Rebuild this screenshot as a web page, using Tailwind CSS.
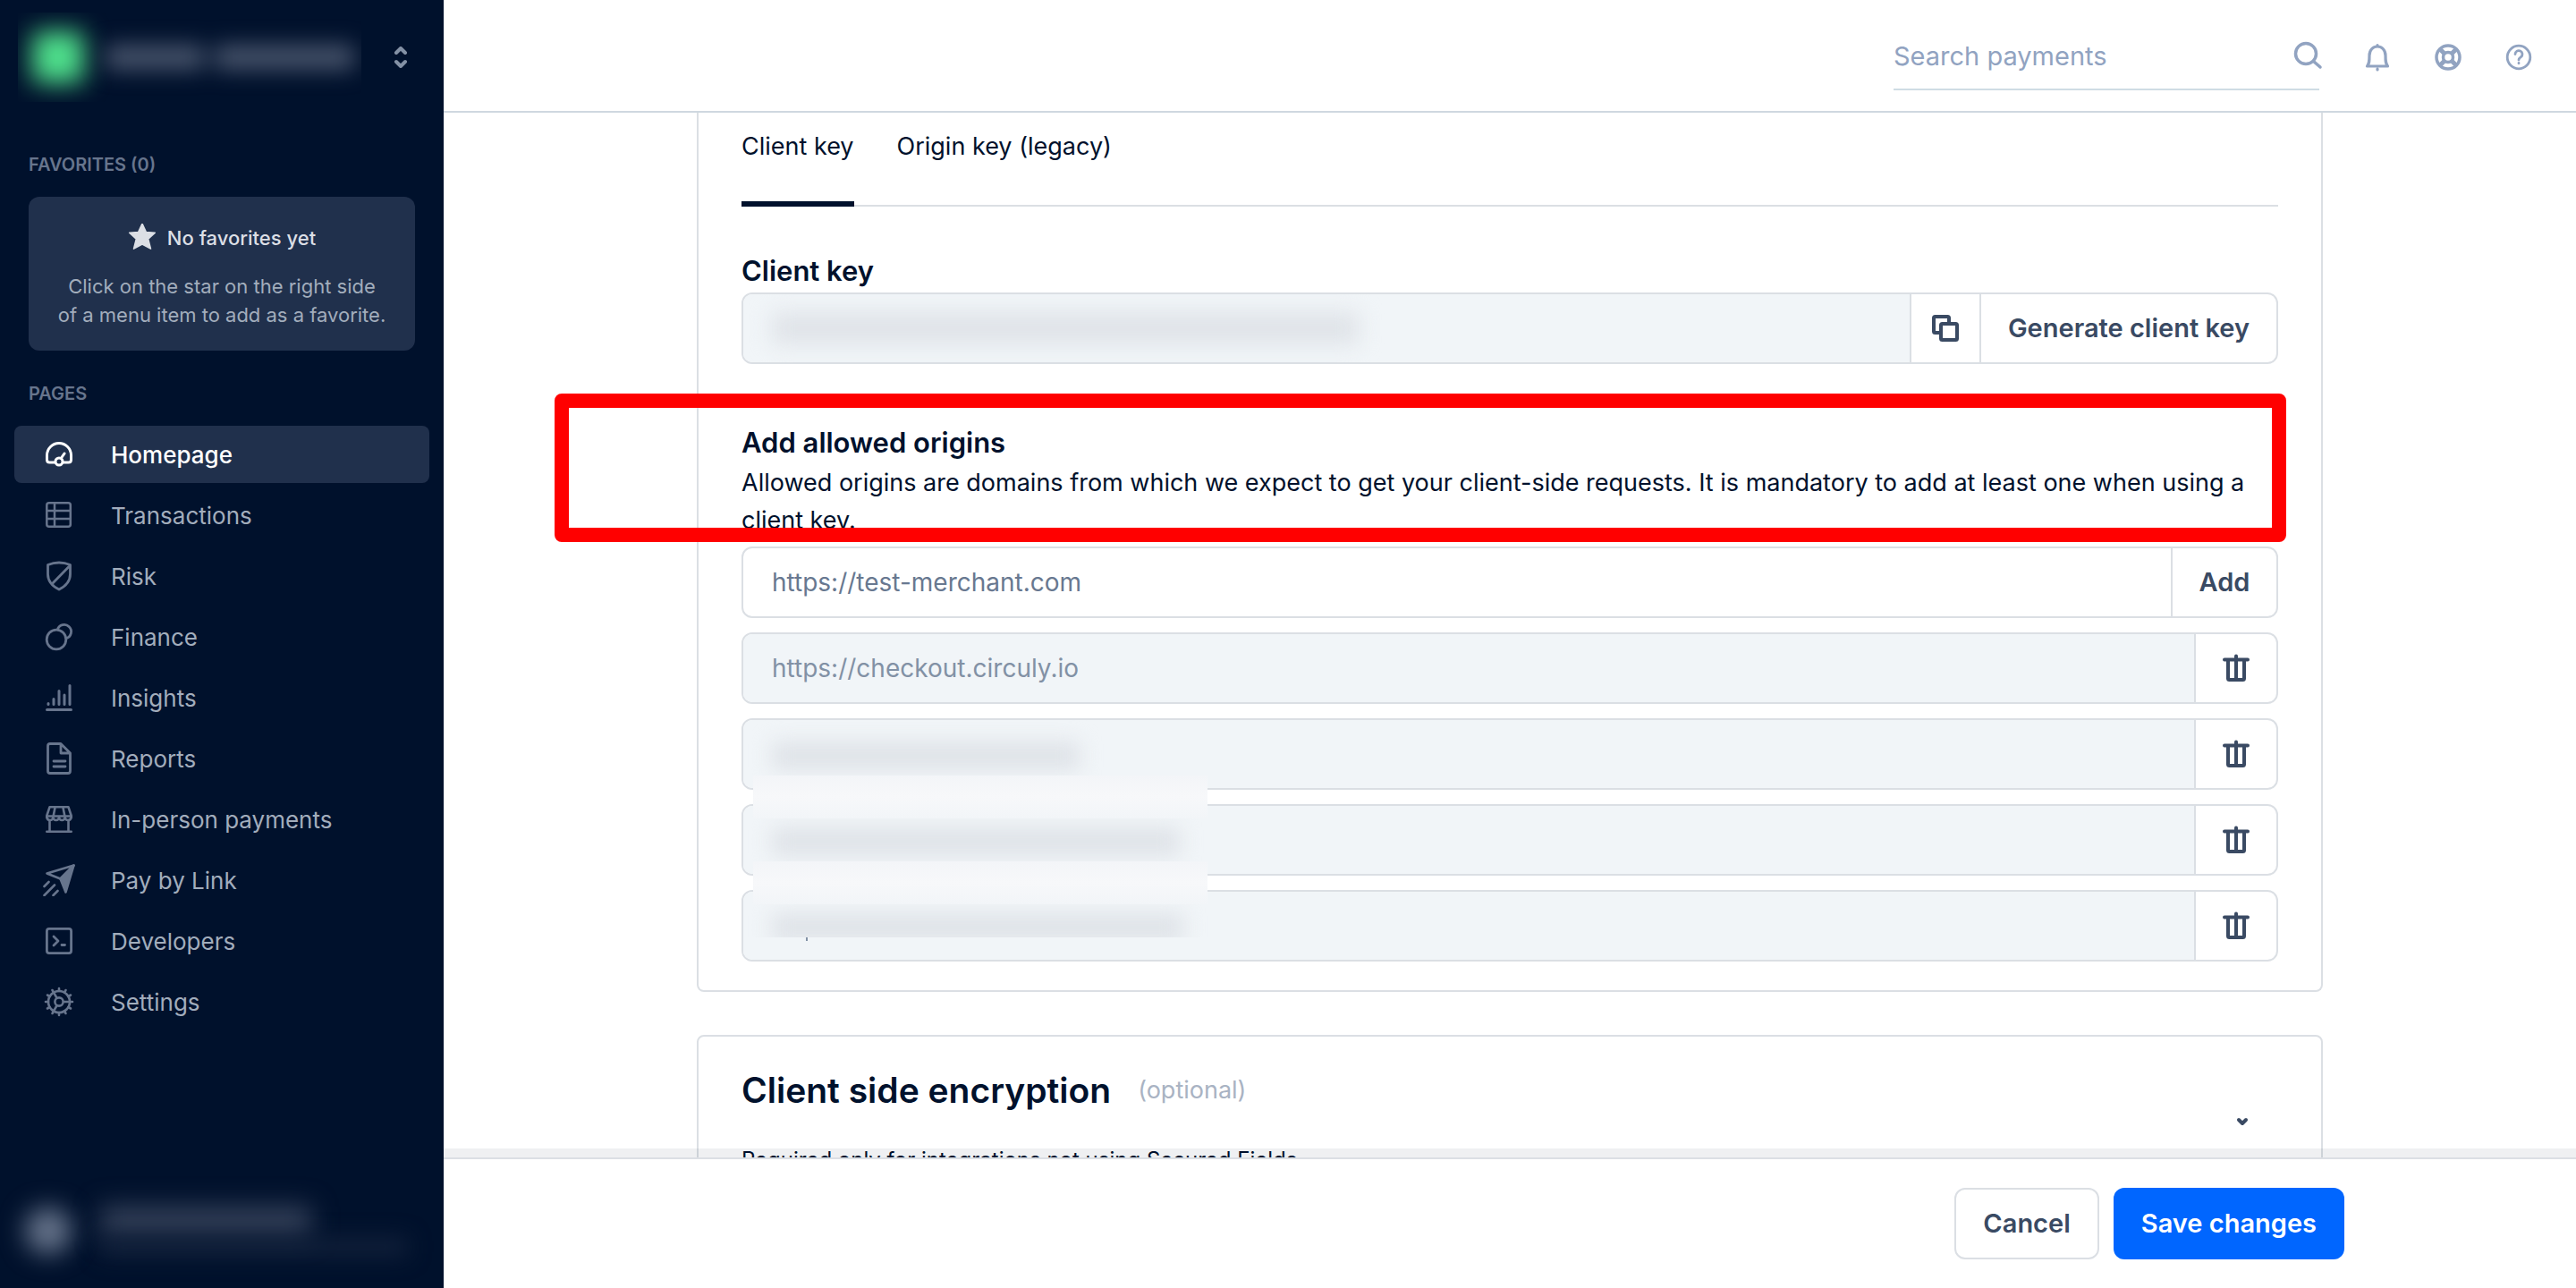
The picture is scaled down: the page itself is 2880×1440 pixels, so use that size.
<!DOCTYPE html>
<html lang="en">
  <head>
    <meta charset="UTF-8" />
    <meta name="viewport" content="width=device-width, initial-scale=1.0" />
    <title>Client settings</title>
    <script src="https://cdn.jsdelivr.net/npm/@tailwindcss/browser@4"></script>
  </head>
  <body class="flex h-screen overflow-hidden bg-white font-['Inter','Liberation_Sans',sans-serif] text-[27px] text-[#00112c]">
    <!-- Sidebar -->
    <aside class="flex w-[496px] shrink-0 flex-col bg-[#00112c]">
      <div class="flex h-32 items-center justify-between pr-9 pl-5">
        <div class="flex h-[100px] w-96 items-center gap-6 overflow-hidden pl-4" aria-hidden="true">
          <div class="size-[58px] shrink-0 rounded-lg bg-[#4fe08c] blur-[14px]"></div>
          <div class="flex gap-3 blur-[12px]">
            <div class="h-7 w-[110px] rounded bg-[#46536a]"></div>
            <div class="h-7 w-[156px] rounded bg-[#46536a]"></div>
          </div>
        </div>
        <button type="button" aria-label="Switch account" class="text-[#8391a5]">
          <svg class="size-6" viewBox="0 0 24 24" fill="none" stroke="currentColor" stroke-width="4" stroke-linecap="round" stroke-linejoin="round">
            <path d="M7 7l5-5 5 5M7 17l5 5 5-5" />
          </svg>
        </button>
      </div>

      <h2 class="mt-10 px-8 text-[20px] leading-8 font-semibold text-[#67758d]">FAVORITES (0)</h2>
      <div class="mx-8 mt-5 rounded-xl bg-[#20304c] px-4 pt-[30px] pb-6 text-center text-[22px] leading-8 text-[#a2adbc]">
        <p class="mb-[22px] flex items-center justify-center gap-3 font-medium text-[#dcdfe5]">
          <svg class="size-8" viewBox="0 0 32 32" fill="currentColor" stroke="currentColor" stroke-width="1.5" stroke-linejoin="round">
            <path d="M16 0l4.300 9.400 10 .9-7.600 6.800 2.800 11L16 23l-9.500 5.100 2.800-11L1.700 10.300l10-.9z" />
          </svg>
          No favorites yet
        </p>
        <p>Click on the star on the right side<br />of a menu item to add as a favorite.</p>
      </div>

      <h2 class="mt-8 px-8 text-[20px] leading-8 font-semibold text-[#67758d]">PAGES</h2>
      <nav class="mt-5 flex flex-col gap-1 px-4 text-[26px] text-[#a2adbc]">
        <a href="#" class="flex h-16 items-center gap-10 rounded-lg bg-[#20304c] pl-8 font-medium text-white">
          <svg class="size-9" viewBox="0 0 36 36" fill="none" stroke="currentColor" stroke-width="3" stroke-linecap="round">
            <path d="M13 27H7.500q-3 0-3-3v-5a13.500 13.500 0 0 1 27 0v5q0 3-3 3H23M20.500 22l3.500-5" />
            <circle cx="18" cy="26" r="4" />
          </svg>
          Homepage
        </a>
        <a href="#" class="flex h-16 items-center gap-10 pl-8">
          <svg class="size-9 text-[#67758d]" viewBox="0 0 36 36" fill="none" stroke="currentColor" stroke-width="2.500">
            <rect x="4.300" y="4.300" width="26.500" height="26.500" rx="2.500" />
            <path d="M13 4v27M4 13h27M4 22h27" />
          </svg>
          Transactions
        </a>
        <a href="#" class="flex h-16 items-center gap-10 pl-8">
          <svg class="size-9 text-[#67758d]" viewBox="0 0 36 36" fill="none" stroke="currentColor" stroke-width="2.800" stroke-linejoin="round">
            <path d="M5.500 5.500Q18 .5 30.500 5.500V16C30.500 25 25 29.500 18 33 11 29.500 5.500 25 5.500 16zM30.500 6L10 27" />
          </svg>
          Risk
        </a>
        <a href="#" class="flex h-16 items-center gap-10 pl-8">
          <svg class="size-9 text-[#67758d]" viewBox="0 0 36 36" fill="none" stroke="currentColor" stroke-width="2.800">
            <circle cx="15" cy="21" r="10.800" />
            <path d="M16.300 10A7.800 7.800 0 1 1 26 19.700" />
          </svg>
          Finance
        </a>
        <a href="#" class="flex h-16 items-center gap-10 pl-8">
          <svg class="size-9 text-[#67758d]" viewBox="0 0 36 36" fill="none" stroke="currentColor" stroke-width="3" stroke-linecap="round">
            <path d="M4.500 31.500h27M6 24.500v1M12 19.500v6M18 10.500v15M24 15v10.500M30 4.500v21" />
          </svg>
          Insights
        </a>
        <a href="#" class="flex h-16 items-center gap-10 pl-8">
          <svg class="size-9 text-[#67758d]" viewBox="0 0 36 36" fill="none" stroke="currentColor" stroke-width="2.800" stroke-linecap="round" stroke-linejoin="round">
            <path d="M20 1.500H8Q5.500 1.500 5.500 4v28q0 2.500 2.500 2.500h20q2.500 0 2.500-2.500V12zM20 2v10h10M12 21h13M12 27h13" />
          </svg>
          Reports
        </a>
        <a href="#" class="flex h-16 items-center gap-10 pl-8">
          <svg class="size-9 text-[#67758d]" viewBox="0 0 36 36" fill="none" stroke="currentColor" stroke-width="2.600" stroke-linecap="round" stroke-linejoin="round">
            <path d="M7.500 4.300h21L31.700 14v2q-1 3-3.700 3t-3.300-3q-.7 3-3.400 3T18 16q-.6 3-3.300 3t-3.400-3q-.6 3-3.300 3t-3.700-3v-2zM4.500 14.500h27M13.500 5l-2 10M22.500 5l2 10M18 14.500V17M7.500 19v12.500M28.500 19v12.500M4.300 31.700h27.400" />
          </svg>
          In-person payments
        </a>
        <a href="#" class="flex h-16 items-center gap-10 pl-8">
          <svg class="size-9 text-[#67758d]" viewBox="0 0 36 36" fill="none" stroke="currentColor" stroke-width="2.600" stroke-linecap="round" stroke-linejoin="round">
            <path d="M34.500 1.500L4.500 10.500l15 6zM1.500 25l5-5M1.500 35L13 23.500M11.500 35l5-5" />
            <path fill="currentColor" d="M34.500 1.500l-15 15 6 15z" />
          </svg>
          Pay by Link
        </a>
        <a href="#" class="flex h-16 items-center gap-10 pl-8">
          <svg class="size-9 text-[#67758d]" viewBox="0 0 36 36" fill="none" stroke="currentColor" stroke-width="2.800" stroke-linecap="round" stroke-linejoin="round">
            <rect x="4.400" y="4.400" width="27.200" height="27.200" rx="2.500" />
            <path d="M12 13l5 5-5 5M21 22.500h3.500" />
          </svg>
          Developers
        </a>
        <a href="#" class="flex h-16 items-center gap-10 pl-8">
          <svg class="size-9 text-[#67758d]" viewBox="0 0 36 36" fill="none" stroke="currentColor" stroke-width="2.600">
            <circle cx="18" cy="18" r="12" />
            <circle cx="18" cy="18" r="4.600" />
            <path d="M22.500 18H30M15.700 14L12 7.600M15.700 22L12 28.400" />
            <path stroke-linecap="round" d="M18 3v3M18 30v3M3 18h3M30 18h3M10.500 5l1.500 2.600M24 28.400l1.500 2.600M5 10.500L7.600 12M28.400 24l2.600 1.500M5 25.500L7.600 24M28.400 12l2.600-1.500M10.500 31l1.500-2.600M24 7.600L25.500 5" />
          </svg>
          Settings
        </a>
      </nav>

      <div class="mt-auto flex h-32 items-center gap-8 pl-7" aria-hidden="true">
        <div class="size-[52px] rounded-full bg-[#66748b] blur-[14px]"></div>
        <div class="flex flex-col">
          <div class="h-9 w-[236px] rounded bg-[#323f57] blur-[14px]"></div>
          <div class="h-5 w-[344px] rounded bg-[#12213b] blur-[12px]"></div>
        </div>
      </div>
    </aside>

    <div class="flex min-w-0 flex-1 flex-col">
      <!-- Top bar -->
      <header class="flex h-[126px] shrink-0 items-center justify-end gap-[43px] border-b-2 border-[#cfd8e0] pt-1 pr-[46px] text-[#91a3c1]">
        <form class="mr-1 flex h-[74px] w-[476px] items-center border-b-2 border-[#cfdce4]">
          <input type="text" aria-label="Search payments" placeholder="Search payments" class="min-w-0 flex-1 text-[29px] outline-none placeholder:text-[#91a3c1]" />
          <button type="submit" aria-label="Search" class="-mr-1">
            <svg class="size-9" viewBox="0 0 36 36" fill="none" stroke="currentColor" stroke-width="3.500" stroke-linecap="round">
              <circle cx="17" cy="15" r="11.500" />
              <path d="M25.500 23.500L33 30" />
            </svg>
          </button>
        </form>
        <button type="button" aria-label="Notifications">
          <svg class="size-9" viewBox="0 0 36 36" fill="none" stroke="currentColor" stroke-width="3.200" stroke-linecap="round" stroke-linejoin="round">
            <path d="M18 4.500v1M6.500 28h23c-2.500-3-2.500-6-2.500-12 0-6-4-10-9-10s-9 4-9 10c0 6 0 9-2.500 12zM18 31v1" />
          </svg>
        </button>
        <button type="button" aria-label="Support">
          <svg class="size-9" viewBox="0 0 36 36" fill="none" stroke="currentColor" stroke-width="3.500">
            <circle cx="18" cy="18" r="13" />
            <circle cx="18" cy="18" r="5.500" />
            <path stroke-width="5" d="M9.500 9.500l4.500 4.500M26.500 9.500L22 14M9.500 26.500L14 22M26.500 26.500L22 22" />
          </svg>
        </button>
        <button type="button" aria-label="Help">
          <svg class="size-9" viewBox="0 0 36 36" fill="none" stroke="currentColor" stroke-width="2.800" stroke-linecap="round">
            <circle cx="18" cy="18" r="12.800" />
            <path d="M14 14.500a4 4 0 1 1 6.500 3.200c-1.700 1.300-2.500 1.800-2.500 3.300M18 24.500v.3" />
          </svg>
        </button>
      </header>

      <!-- Page content -->
      <main class="min-h-0 flex-1 overflow-hidden">
        <section class="mx-auto max-w-[1818px] rounded-b-lg border-x-2 border-b-2 border-[#dbdfe4] px-12 pb-8">
          <div role="tablist" class="flex gap-12 leading-9 shadow-[inset_0_-2px_0_#dbdfe4]">
            <button type="button" role="tab" aria-selected="true" class="border-b-[6px] border-[#00112c] pt-5 pb-[43px]">Client key</button>
            <button type="button" role="tab" aria-selected="false" class="border-b-[6px] border-transparent pt-5 pb-[43px]">Origin key (legacy)</button>
          </div>

          <label for="client-key" class="mt-[52px] block text-[31px] leading-10 font-semibold">Client key</label>
          <div class="relative mt-1 flex h-20 overflow-hidden rounded-xl border-2 border-[#dbdfe4]">
            <input id="client-key" type="text" readonly class="min-w-0 flex-1 bg-[#f1f5f8] px-8 outline-none" />
            <div class="absolute top-5 left-8 h-9 w-[656px] rounded bg-[#dfe3e8] blur-[12px]" aria-hidden="true"></div>
            <button type="button" aria-label="Copy client key" class="flex w-[78px] items-center justify-center border-l-2 border-[#dbdfe4] text-[#3a4a63]">
              <svg class="size-9" viewBox="0 0 36 36" fill="none" stroke="currentColor" stroke-width="4" stroke-linejoin="round">
                <path d="M12 23H6.500q-1.500 0-1.500-1.500V6.500Q5 5 6.500 5h14Q22 5 22 6.500V12" />
                <rect x="13" y="13" width="18" height="18" rx="1.500" />
              </svg>
            </button>
            <button type="button" class="border-l-2 border-[#dbdfe4] px-[30px] text-[29px] font-semibold text-[#3a4a63]">Generate client key</button>
          </div>

          <div class="relative mt-[68px]">
            <h3 class="text-[31px] leading-10 font-semibold">Add allowed origins</h3>
            <p class="mt-1 leading-[42px]">Allowed origins are domains from which we expect to get your client-side requests. It is mandatory to add at least one when using a client key.</p>
            <!-- Highlight -->
            <div class="pointer-events-none absolute -top-[35px] -right-[9px] -bottom-[3px] -left-[209px] rounded-lg border-16 border-[#ff0000]"></div>
          </div>

          <div class="mt-2 flex flex-col gap-4 text-[28px]">
            <form class="flex h-20 overflow-hidden rounded-xl border-2 border-[#dbdfe4]">
              <input type="text" aria-label="New allowed origin" placeholder="https://test-merchant.com" class="min-w-0 flex-1 px-8 outline-none placeholder:text-[#687890]" />
              <button type="submit" class="w-[118px] border-l-2 border-[#dbdfe4] text-[29px] font-semibold text-[#3a4a63]">Add</button>
            </form>
            <div class="flex h-20 overflow-hidden rounded-xl border-2 border-[#dbdfe4]">
              <input type="text" aria-label="Allowed origin 1" readonly value="https://checkout.circuly.io" class="min-w-0 flex-1 bg-[#f1f5f8] px-8 text-[#8291a5] outline-none" />
              <button type="button" aria-label="Remove origin 1" class="flex w-[92px] items-center justify-center border-l-2 border-[#dbdfe4] text-[#3a4a63]">
                <svg class="size-9" viewBox="0 0 36 36" fill="none" stroke="currentColor" stroke-width="4" stroke-linecap="round" stroke-linejoin="round">
                  <path d="M5 8.500h26M18 4.500V31M9 9v20.500Q9 31 10.500 31h15q1.500 0 1.500-1.500V9" />
                </svg>
              </button>
            </div>
            <div class="relative flex h-20 overflow-hidden rounded-xl border-2 border-[#dbdfe4]">
              <input type="text" aria-label="Allowed origin 2" readonly class="min-w-0 flex-1 bg-[#f1f5f8] px-8 outline-none" />
              <div class="absolute top-6 left-8 h-8 w-[344px] rounded bg-[#dfe3e8] blur-[11px]" aria-hidden="true"></div>
              <button type="button" aria-label="Remove origin 2" class="flex w-[92px] items-center justify-center border-l-2 border-[#dbdfe4] text-[#3a4a63]">
                <svg class="size-9" viewBox="0 0 36 36" fill="none" stroke="currentColor" stroke-width="4" stroke-linecap="round" stroke-linejoin="round">
                  <path d="M5 8.500h26M18 4.500V31M9 9v20.500Q9 31 10.500 31h15q1.500 0 1.500-1.500V9" />
                </svg>
              </button>
            </div>
            <div class="relative">
              <div class="relative flex h-20 overflow-hidden rounded-xl border-2 border-[#dbdfe4]">
                <input type="text" aria-label="Allowed origin 3" readonly class="min-w-0 flex-1 bg-[#f1f5f8] px-8 outline-none" />
                <div class="absolute top-6 left-8 h-8 w-[456px] rounded bg-[#dfe3e8] blur-[11px]" aria-hidden="true"></div>
                <button type="button" aria-label="Remove origin 3" class="flex w-[92px] items-center justify-center border-l-2 border-[#dbdfe4] text-[#3a4a63]">
                  <svg class="size-9" viewBox="0 0 36 36" fill="none" stroke="currentColor" stroke-width="4" stroke-linecap="round" stroke-linejoin="round">
                    <path d="M5 8.500h26M18 4.500V31M9 9v20.500Q9 31 10.500 31h15q1.500 0 1.500-1.500V9" />
                  </svg>
                </button>
              </div>
              <div class="absolute -top-8 left-[13px] h-12 w-[508px] bg-linear-to-b from-[#f3f5f8] via-[#f7f8fa] to-[#f2f5f8]" aria-hidden="true"></div>
            </div>
            <div class="relative">
              <div class="relative flex h-20 overflow-hidden rounded-xl border-2 border-[#dbdfe4]">
                <input type="text" aria-label="Allowed origin 4" readonly class="min-w-0 flex-1 bg-[#f1f5f8] px-8 outline-none" />
                <div class="absolute top-0 left-0 h-[51px] w-[520px] overflow-hidden" aria-hidden="true">
                  <div class="mt-6 ml-8 h-8 w-[460px] rounded bg-[#dfe3e8] blur-[11px]"></div>
                </div>
                <div class="absolute top-[51px] left-[70px] h-1 w-0.5 bg-[#8291a5]" aria-hidden="true"></div>
                <button type="button" aria-label="Remove origin 4" class="flex w-[92px] items-center justify-center border-l-2 border-[#dbdfe4] text-[#3a4a63]">
                  <svg class="size-9" viewBox="0 0 36 36" fill="none" stroke="currentColor" stroke-width="4" stroke-linecap="round" stroke-linejoin="round">
                    <path d="M5 8.500h26M18 4.500V31M9 9v20.500Q9 31 10.500 31h15q1.500 0 1.500-1.500V9" />
                  </svg>
                </button>
              </div>
              <div class="absolute -top-8 left-[13px] h-12 w-[508px] bg-linear-to-b from-[#f3f5f8] via-[#f7f8fa] to-[#f2f5f8]" aria-hidden="true"></div>
            </div>
          </div>
        </section>

        <section class="mx-auto mt-12 flex max-w-[1818px] items-center justify-between rounded-lg border-2 border-[#dbdfe4] px-12 pt-9 pb-8">
          <div>
            <h2 class="flex items-center gap-[30px] text-[39px] leading-[48px] font-semibold">
              Client side encryption
              <span class="text-[27px] font-normal text-[#a9b3c3]">(optional)</span>
            </h2>
            <p class="mt-[34px] text-[24px] leading-10">Required only for integrations not using Secured Fields</p>
          </div>
          <button type="button" aria-label="Expand" class="flex size-20 items-center justify-center text-[#3a4a63]">
            <svg class="size-6" viewBox="0 0 24 24" fill="none" stroke="currentColor" stroke-width="4" stroke-linecap="round" stroke-linejoin="round">
              <path d="M8 8l4 4 4-4" />
            </svg>
          </button>
        </section>
      </main>

      <footer class="relative shrink-0 border-t-2 border-[#dbdfe4] bg-white py-8 shadow-[0_-10px_0_#00112c10]">
        <div class="mx-auto flex max-w-[1866px] justify-end gap-4 text-[29px] font-semibold">
          <button type="button" class="h-20 rounded-xl border-2 border-[#dbdfe4] px-[30px] text-[#3a4a63]">Cancel</button>
          <button type="button" class="h-20 rounded-xl bg-[#0066ff] px-[31px] text-white">Save changes</button>
        </div>
      </footer>
    </div>
  </body>
</html>
